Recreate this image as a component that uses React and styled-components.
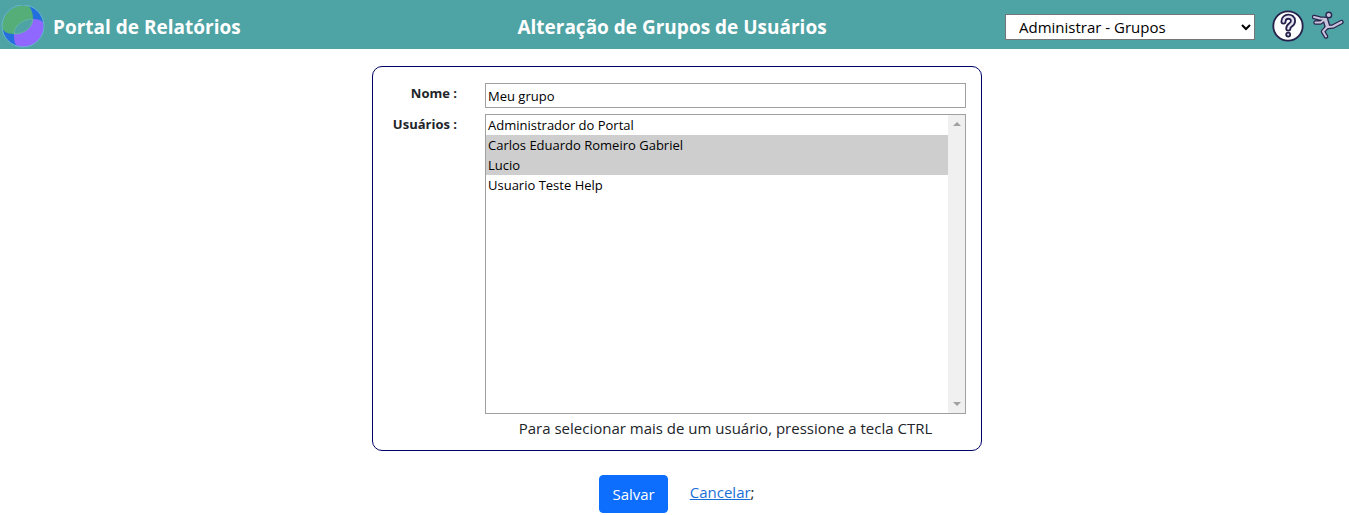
import React, { useState } from 'react'
import styled, { createGlobalStyle } from 'styled-components'

const GlobalStyle = createGlobalStyle`
  * {
    box-sizing: border-box;
  }

  body {
    margin: 0;
    background-color: #ffffff;
    color: #212529;
    font-family: "Segoe UI", "Open Sans", "Noto Sans", sans-serif;
    font-size: 15px;
    line-height: 24px;
  }
`

const Header = styled.header`
  display: grid;
  grid-template-columns: 1fr auto 1fr;
  align-items: center;
  height: 49px;
  padding: 5px 5px 0 0;
  background-color: #4ea3a4;
  color: white;
`

const Brand = styled.div`
  display: flex;
  align-items: center;
  gap: 7px;
`

const HeaderTitle = styled.h1`
  margin: 0;
  font-size: 19px;
  font-weight: bold;
  line-height: 28px;
`

const HeaderTools = styled.div`
  display: flex;
  align-items: center;
  justify-content: flex-end;
`

const MenuSelect = styled.select`
  width: 250px;
  height: 26px;
  margin-right: 17px;
  padding: 0 0 0 9px;
  border: 1px solid #767676;
  border-radius: 0;
  background-color: white;
  color: black;
  font-family: inherit;
  font-size: 15px;
`

const IconButton = styled.button`
  display: flex;
  padding: 0 0 2px;
  border: none;
  background: none;
  cursor: pointer;

  & + & {
    margin-left: 8px;
  }
`

const Main = styled.main`
  display: flex;
  flex-direction: column;
  align-items: center;
  padding: 17px 0 0 5px;
`

const Form = styled.form`
  display: flex;
  flex-direction: column;
  align-items: center;
  gap: 24px;
  width: 100%;
  max-width: 610px;
`

const Panel = styled.div`
  display: grid;
  grid-template-columns: 69px 1fr;
  column-gap: 28px;
  row-gap: 6px;
  width: 100%;
  padding: 16px 15px 10px;
  border: 1px solid #000066;
  border-radius: 10px;
`

const Label = styled.label`
  color: #212529;
  font-size: 13px;
  font-weight: bold;
  line-height: 20px;
  text-align: right;
  white-space: nowrap;
`

const NameInput = styled.input`
  width: 100%;
  height: 25px;
  padding: 1px 2px;
  border: 1px solid #a0a0a0;
  border-radius: 0;
  outline: none;
  color: black;
  font-family: inherit;
  font-size: 13px;
`

const ListFrame = styled.div`
  display: flex;
  height: 300px;
  border: 1px solid #a0a0a0;
`

const UserList = styled.select`
  flex: 1;
  min-width: 0;
  height: 100%;
  padding: 0;
  border: none;
  border-radius: 0;
  outline: none;
  overflow-y: auto;
  scrollbar-width: none;
  background-color: white;
  color: black;
  font-family: inherit;
  font-size: 13px;

  option {
    height: 20px;
    min-height: 20px;
    padding: 1px 2px 0;
    line-height: 18px;
  }

  option:checked {
    background-color: #cecece;
    color: black;
  }
`

const ScrollTrack = styled.div`
  display: flex;
  flex-direction: column;
  justify-content: space-between;
  align-items: center;
  width: 17px;
  padding: 7px 0;
  background-color: #f0f0f0;
`

const ScrollArrow = styled.span`
  border: 4px solid transparent;
  border-top: ${({ $down }) => ($down ? '4px solid #a0a0a0' : 'none')};
  border-bottom: ${({ $down }) => ($down ? 'none' : '4px solid #a0a0a0')};
`

const Hint = styled.p`
  grid-column: 2;
  margin: -4px 0 0;
  text-align: center;
`

const Actions = styled.div`
  display: flex;
  gap: 22px;
`

const SaveButton = styled.button`
  height: 38px;
  padding: 0 12px;
  border: 1px solid #0d6efd;
  border-radius: 4px;
  background-color: #0d6efd;
  color: white;
  font-family: inherit;
  font-size: 15px;
  cursor: pointer;

  &:hover {
    background-color: #0b5ed7;
  }
`

const CancelText = styled.span`
  padding-top: 5px;
`

const CancelLink = styled.a`
  color: #1a6fd6;
`

const Logo = () => (
  <svg width="46" height="44" viewBox="0 2 46 44" aria-hidden="true">
    <circle cx="23" cy="23" r="21" fill="#226fdd" />
    <path d="M29 3C16 0 4 8 2 21C2 24 2 26 3 27C6 30 10 31 14 31C22 31 32 24 33 16C33 11 32 7 29 3Z" fill="#55ae78" />
    <path d="M14 31C15 22 24 16 33 16C37 16 41 17 43 19C46 32 36 44 23 44C20 44 18 43 16 42C14 39 14 35 14 31Z" fill="#9068ff" />
    <path d="M14 31C14 22 23 16 33 16C32 25 24 31 14 31Z" fill="#4ea3a4" stroke="#66bd9f" strokeWidth="0.8" />
    <circle cx="23" cy="23" r="21" fill="none" stroke="#69b6cf" />
  </svg>
)

const helpHook = 'M11.5 11.5C11.5 5.3 21 5 21 11C21 15.2 16.3 14.5 16.3 18.5'

const HelpIcon = () => (
  <svg width="32" height="32" viewBox="0 0 32 32" aria-hidden="true">
    <circle cx="16" cy="16" r="14.7" fill="white" stroke="#25214c" strokeWidth="1.8" />
    <path d={helpHook} fill="none" stroke="#25214c" strokeWidth="6" strokeLinecap="round" strokeLinejoin="round" />
    <path d={helpHook} fill="none" stroke="#e8e5f2" strokeWidth="2.4" strokeLinecap="round" strokeLinejoin="round" />
    <circle cx="16.2" cy="24.6" r="2" fill="#e8e5f2" stroke="#25214c" strokeWidth="1.8" />
  </svg>
)

const runnerLines = 'M2 7L8 8.5L14 9M3.5 12.5L8.5 12.5L12 10M15 17L11 21.5L14 26.5M16 17L21 16.5L29.5 12'

const ExitIcon = () => (
  <svg width="32" height="32" viewBox="0 0 32 32" fill="none" strokeLinecap="round" strokeLinejoin="round" aria-hidden="true">
    <path d={runnerLines} stroke="#29264f" strokeWidth="4.4" />
    <path d="M13.5 10L15.5 16.5" stroke="#29264f" strokeWidth="6" />
    <circle cx="16.8" cy="5" r="2.8" fill="#c9c4dc" stroke="#29264f" strokeWidth="1.4" />
    <path d="M13.5 10L15.5 16.5" stroke="#c9c4dc" strokeWidth="3.4" />
    <path d={runnerLines} stroke="#c9c4dc" strokeWidth="2" />
  </svg>
)

const users = [
  { id: '1', name: 'Administrador do Portal' },
  { id: '2', name: 'Carlos Eduardo Romeiro Gabriel' },
  { id: '3', name: 'Lucio' },
  { id: '4', name: 'Usuario Teste Help' },
]

export default function App() {
  const [name, setName] = useState('Meu grupo')
  const [selected, setSelected] = useState(['2', '3'])

  const onChangeUsers = (e) => {
    setSelected(Array.from(e.target.selectedOptions, (option) => option.value))
  }

  return (
    <>
      <GlobalStyle />
      <Header>
        <Brand>
          <Logo />
          <HeaderTitle as="span">Portal de Relatórios</HeaderTitle>
        </Brand>
        <HeaderTitle>Alteração de Grupos de Usuários</HeaderTitle>
        <HeaderTools>
          <MenuSelect aria-label="Menu" defaultValue="grupos">
            <option value="grupos">Administrar - Grupos</option>
          </MenuSelect>
          <IconButton type="button" aria-label="Ajuda"><HelpIcon /></IconButton>
          <IconButton type="button" aria-label="Sair"><ExitIcon /></IconButton>
        </HeaderTools>
      </Header>
      <Main>
        <Form onSubmit={(e) => e.preventDefault()}>
          <Panel>
            <Label htmlFor="nome">Nome :</Label>
            <NameInput id="nome" type="text" value={name} onChange={(e) => setName(e.target.value)} />
            <Label htmlFor="usuarios">Usuários :</Label>
            <ListFrame>
              <UserList id="usuarios" multiple value={selected} onChange={onChangeUsers}>
                {users.map((user) => (
                  <option key={user.id} value={user.id}>{user.name}</option>
                ))}
              </UserList>
              <ScrollTrack aria-hidden="true">
                <ScrollArrow />
                <ScrollArrow $down />
              </ScrollTrack>
            </ListFrame>
            <Hint>Para selecionar mais de um usuário, pressione a tecla CTRL</Hint>
          </Panel>
          <Actions>
            <SaveButton type="submit">Salvar</SaveButton>
            <CancelText><CancelLink href="#">Cancelar</CancelLink>;</CancelText>
          </Actions>
        </Form>
      </Main>
    </>
  )
}
